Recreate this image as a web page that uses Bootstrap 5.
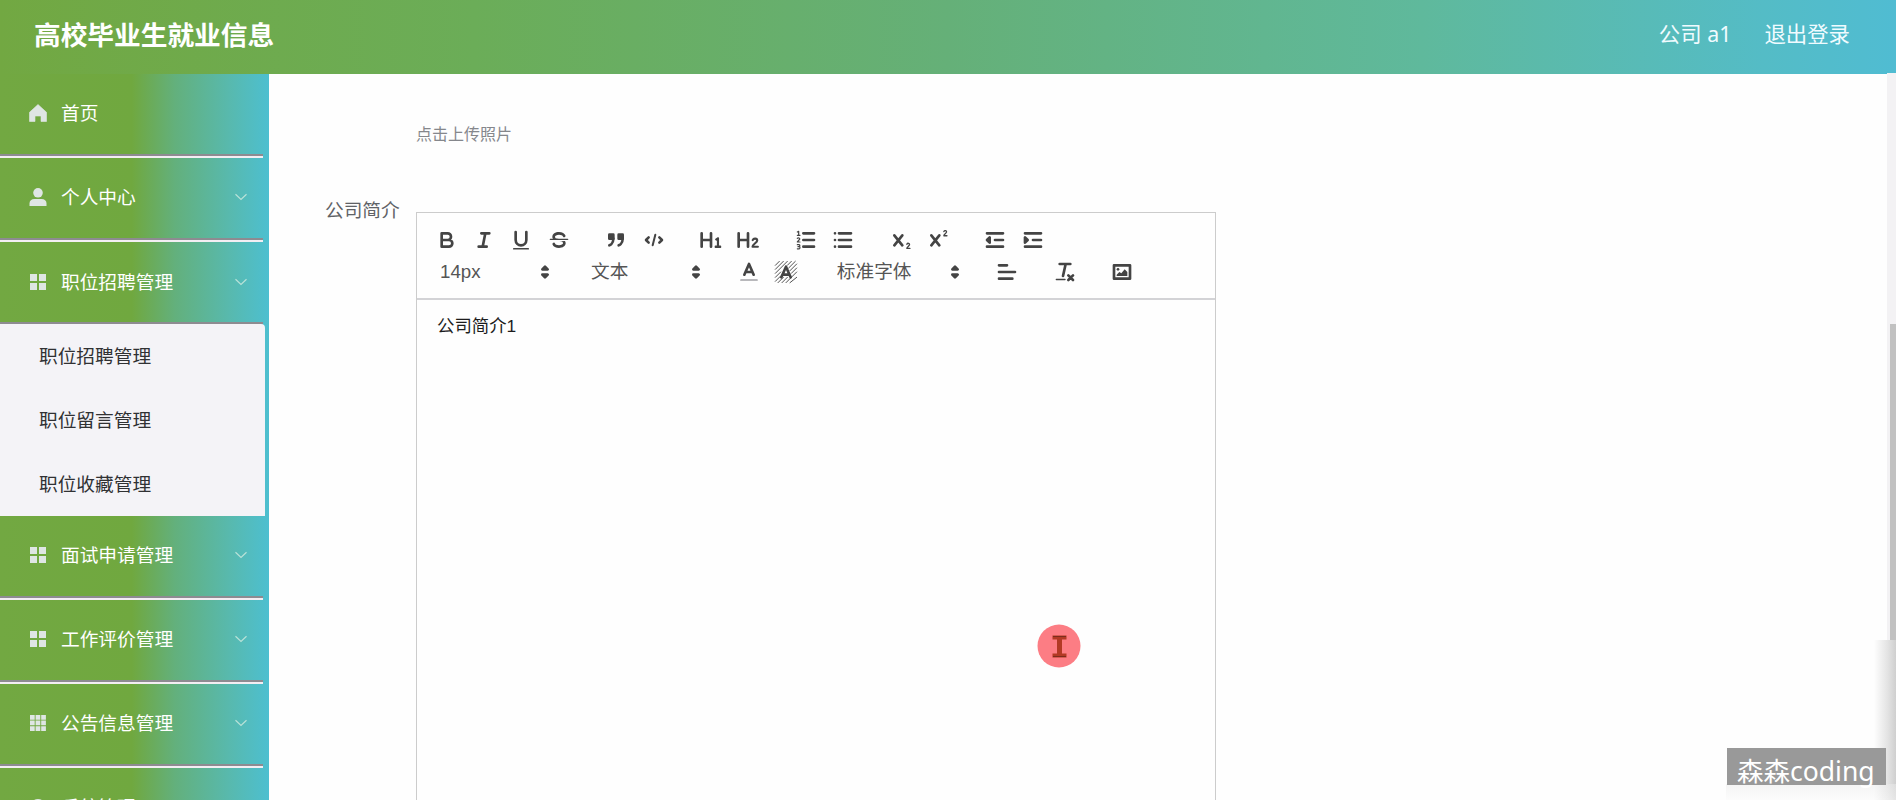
<!DOCTYPE html>
<html lang="zh-CN">
<head>
<meta charset="utf-8">
<title>高校毕业生就业信息</title>
<meta name="viewport" content="width=device-width, initial-scale=1">
<link href="https://cdn.jsdelivr.net/npm/bootstrap@5.3.0/dist/css/bootstrap.min.css" rel="stylesheet">
<style>
html,body{height:100%;overflow:hidden}
body{font-family:"Liberation Sans","Noto Sans CJK SC",sans-serif;font-size:18.7px;line-height:1.3;background:#fefefe;color:#606266}
.topbar{height:73.5px;background:linear-gradient(90deg,#72a842 0%,#6bad58 25%,#65b078 50%,#5fb99c 75%,#54bcc6 93%,#50bcd2 100%);padding:0 46px 4px 34px;color:#fff}
.brand{font-size:26.7px;font-weight:700;padding-top:4px}
.toplinks{font-family:"Noto Sans","Noto Sans CJK SC",sans-serif;font-size:21.4px;gap:33px;color:#f0fbff;padding-bottom:2px}
.side{width:269px;flex:none;background:linear-gradient(90deg,#72a842 0%,#70a83f 49%,#63b07c 65%,#58b9ad 85%,#4dbfd0 100%)}
.side-item{width:263px;height:84px;padding:0 15px 4px 28px;color:#fff;border-bottom:2px solid #f3eef3;box-shadow:inset 0 -2px 0 #8d8b91;flex:none}
.side-item span{padding-top:3px}
.side-item svg{flex:none}
.side-item .ic{width:20px;height:20px;fill:#dfe6e4;margin-right:13px}
.side-item .chev{width:14px;height:8px;fill:none;stroke:#b9e2d8;stroke-width:1.2;margin-left:auto}
.side-item.opened{height:82px;border-bottom:0;padding-bottom:2px}
.submenu{width:265px;height:192px;background:#f4f3f7;color:#333;border-top-right-radius:4px;flex:none}
.submenu a{height:64px;padding:3px 0 0 39px;color:#303133;text-decoration:none}
.pane{padding:0 0 0 56px}
.upload-tip{font-size:16px;color:#85878c;margin:50px 0 0 91px;height:21px;line-height:21px}
.form-line{margin-top:67px}
.form-name{width:91px;flex:none;line-height:24px;margin-top:-13px}
.editor{width:800px;height:640px;border:1px solid #ccc;border-bottom:0}
.tools{height:87px;padding:11px 0 0 11px;border-bottom:2px solid #d3d3d6;color:#444}
.tool-row{height:32px;gap:20px}
.tool{width:37.4px;height:32px}
.tool svg,.pick svg{width:24px;height:24px}
.pick{width:131px;height:32px;padding-left:12px;color:#555}
.pick span{padding-top:2px}
.pick svg{margin-right:2px}
.pick.wide{width:144px}
svg .s{fill:none;stroke:#444;stroke-linecap:round;stroke-linejoin:round;stroke-width:2}
svg .t{fill:none;stroke:#444;stroke-linecap:round;stroke-linejoin:round;stroke-width:1}
svg .f{fill:#444}
svg .sf{fill:#444;stroke:#444;stroke-linecap:round;stroke-linejoin:round;stroke-width:2}
.entry{font-size:17.4px;color:#1c1c1c;padding:15px 20px}
.pointer{position:absolute;left:1037px;top:624px;width:44px;height:44px}
.track{position:absolute;right:0;top:73px;width:9px;height:727px;background:#f3f2f4}
.thumb{position:absolute;right:0;top:324px;width:6px;height:316px;background:#c1c1c1}
.edge-shade{position:absolute;right:0;top:640px;width:22px;height:160px;background:linear-gradient(90deg,rgba(254,254,254,0),#e4e4e4 60%,#cfcfcf)}
.foot-shade{position:absolute;right:0;bottom:0;width:170px;height:16px;background:linear-gradient(#ebebeb,#fafafa);opacity:.5}
.stamp{position:absolute;left:1727px;top:748px;width:159px;height:37px;background:#999;color:#fff;font-family:"Noto Sans","Noto Sans CJK SC",sans-serif;font-size:26.5px;line-height:46px;padding-left:10px;white-space:nowrap}
</style>
</head>
<body class="d-flex flex-column position-relative">
<svg width="0" height="0" class="position-absolute"><defs>
<symbol id="grid4" viewBox="0 0 20 20"><path d="M2 2h7v7H2zM11 2h7v7h-7zM2 11h7v7H2zM11 11h7v7h-7z"/></symbol>
<symbol id="grid9" viewBox="0 0 20 20"><path d="M2 2h4.700v4.700H2zM7.600 2h4.700v4.700h-4.700zM13.200 2h4.700v4.700h-4.700zM2 7.600h4.700v4.700H2zM7.600 7.600h4.700v4.700h-4.700zM13.200 7.600h4.700v4.700h-4.700zM2 13.200h4.700v4.700H2zM7.600 13.200h4.700v4.700h-4.700zM13.200 13.200h4.700v4.700h-4.700z"/></symbol>
<symbol id="chevron" viewBox="0 0 14 8"><path d="M1.500 1.200 7 6.500l5.500-5.300"/></symbol>
<symbol id="updown" viewBox="0 0 18 18"><path class="sf" d="M7 11l2 2 2-2zM7 7l2-2 2 2z"/></symbol>
</defs></svg>

<header class="topbar d-flex align-items-center justify-content-between flex-shrink-0">
  <div class="brand">高校毕业生就业信息</div>
  <nav class="toplinks d-flex"><span>公司 a1</span><span>退出登录</span></nav>
</header>

<div class="d-flex flex-grow-1 overflow-hidden">
  <aside class="side d-flex flex-column overflow-hidden">
    <div class="side-item d-flex align-items-center"><svg class="ic" viewBox="0 0 20 20"><path d="M10 1.500 1.500 9.300V18.500H7V13h6v5.500h5.500V9.300z" stroke="#dfe6e4" stroke-width=".6" stroke-linejoin="round"/></svg><span>首页</span></div>
    <div class="side-item d-flex align-items-center"><svg class="ic" viewBox="0 0 20 20"><circle cx="10" cy="5.800" r="4.800"/><path d="M1.500 19v-2.500c0-3 2-4.500 5-4.500h7c3 0 5 1.500 5 4.500V19z"/></svg><span>个人中心</span><svg class="chev"><use href="#chevron"/></svg></div>
    <div class="side-item opened d-flex align-items-center"><svg class="ic"><use href="#grid4"/></svg><span>职位招聘管理</span><svg class="chev"><use href="#chevron"/></svg></div>
    <div class="submenu d-flex flex-column">
      <a class="d-flex align-items-center">职位招聘管理</a>
      <a class="d-flex align-items-center">职位留言管理</a>
      <a class="d-flex align-items-center">职位收藏管理</a>
    </div>
    <div class="side-item d-flex align-items-center"><svg class="ic"><use href="#grid4"/></svg><span>面试申请管理</span><svg class="chev"><use href="#chevron"/></svg></div>
    <div class="side-item d-flex align-items-center"><svg class="ic"><use href="#grid4"/></svg><span>工作评价管理</span><svg class="chev"><use href="#chevron"/></svg></div>
    <div class="side-item d-flex align-items-center"><svg class="ic"><use href="#grid9"/></svg><span>公告信息管理</span><svg class="chev"><use href="#chevron"/></svg></div>
    <div class="side-item d-flex align-items-center"><svg class="ic" viewBox="0 0 20 20"><circle cx="10" cy="10" r="8"/></svg><span>系统管理</span><svg class="chev"><use href="#chevron"/></svg></div>
  </aside>

  <main class="pane flex-grow-1">
    <div class="upload-tip">点击上传照片</div>
    <div class="form-line d-flex">
      <div class="form-name">公司简介</div>
      <div class="editor">
        <div class="tools">
          <div class="tool-row d-flex">
            <div class="d-flex">
              <span class="tool d-flex align-items-center justify-content-center"><svg viewBox="0 0 18 18"><path class="s" d="M5 4h4.500a2.500 2.500 0 0 1 0 5H5zM5 9h5.500a2.500 2.500 0 0 1 0 5H5z"/></svg></span>
              <span class="tool d-flex align-items-center justify-content-center"><svg viewBox="0 0 18 18"><path class="s" d="M7 4h6M5 14h6M8 14l2-10"/></svg></span>
              <span class="tool d-flex align-items-center justify-content-center"><svg viewBox="0 0 18 18"><path class="s" d="M5 3v6a4 4 0 0 0 8 0V3"/><rect class="f" x="3" y="15" width="12" height="1.200" rx=".5"/></svg></span>
              <span class="tool d-flex align-items-center justify-content-center"><svg viewBox="0 0 18 18"><path class="t" d="M15.500 8.500h-13"/><path class="f" d="M9.007 8C6.542 7.791 6 7.519 6 6.500 6 5.792 7.283 5 9 5c1.571 0 2.765.679 2.969 1.309a1 1 0 0 0 1.900-.617C13.356 4.106 11.354 3 9 3 6.200 3 4 4.538 4 6.500a3.200 3.200 0 0 0 .5 1.843zM8.984 10C11.457 10.208 12 10.479 12 11.500c0 .708-1.283 1.500-3 1.500-1.571 0-2.765-.679-2.969-1.309a1 1 0 1 0-1.900.617C4.644 13.894 6.646 15 9 15c2.800 0 5-1.538 5-3.500a3.200 3.200 0 0 0-.5-1.843z"/></svg></span>
            </div>
            <div class="d-flex">
              <span class="tool d-flex align-items-center justify-content-center"><svg viewBox="0 0 18 18"><path class="sf" d="M4 5h3v3H4zM11 5h3v3h-3z"/><path class="s" d="M7 8c0 4.031-3 5-3 5M14 8c0 4.031-3 5-3 5"/></svg></span>
              <span class="tool d-flex align-items-center justify-content-center"><svg viewBox="0 0 18 18"><path class="s" style="stroke-width:1.900" d="M5 7 3 9l2 2M13 7l2 2-2 2"/><path class="s" style="stroke-width:1.500" d="M10 5 8 13"/></svg></span>
            </div>
            <div class="d-flex">
              <span class="tool d-flex align-items-center justify-content-center"><svg viewBox="0 0 18 18"><path class="f" d="M10 4v10a1 1 0 0 1-2 0v-4H3v4a1 1 0 0 1-2 0V4a1 1 0 0 1 2 0v4h5V4a1 1 0 0 1 2 0zm6.068 9.209h-1.030V7.590a.6.6 0 0 0-.605-.605h-.435a1.001 1.001 0 0 0-.578.297l-1.078.770a.588.588 0 0 0-.121.858l.286.308a.588.588 0 0 0 .847.088l.055-.033v3.936h-1.044a.594.594 0 0 0-.616.605v.561a.594.594 0 0 0 .616.605h3.685a.594.594 0 0 0 .616-.605v-.561a.594.594 0 0 0-.598-.605z"/></svg></span>
              <span class="tool d-flex align-items-center justify-content-center"><svg viewBox="0 0 18 18"><path class="f" d="M10 4v10a1 1 0 0 1-2 0v-4H3v4a1 1 0 0 1-2 0V4a1 1 0 0 1 2 0v4h5V4a1 1 0 0 1 2 0z"/><path class="s" style="stroke-width:1.600" d="M12.500 9.100c.7-1.600 3.400-1.500 3.400.3 0 1.600-3.300 2.600-3.500 4.700h4"/></svg></span>
            </div>
            <div class="d-flex">
              <span class="tool d-flex align-items-center justify-content-center"><svg viewBox="0 0 18 18"><path class="s" d="M7 4h8M7 9h8M7 14h8"/><path class="t" style="stroke-width:.9" d="M2.500 5.500h2M3.500 5.500v-3l-1 .5M2.500 7.700c.8-.6 2-.2 1.800.6L2.500 10.500h2M2.500 12.500h1.300c.8 0 .8 1.500 0 1.500H3M3.800 14c1 0 .8 1.600 0 1.600H2.500"/></svg></span>
              <span class="tool d-flex align-items-center justify-content-center"><svg viewBox="0 0 18 18"><path class="s" d="M6 4h9M6 9h9M6 14h9M3 4h0M3 9h0M3 14h0"/></svg></span>
            </div>
            <div class="d-flex">
              <span class="tool d-flex align-items-center justify-content-center"><svg viewBox="0 0 18 18"><path class="s" d="m4 5.500 6 7.500M10 5.500 4 13"/><path class="t" d="M13.400 12.200c.5-1.200 2.200-.8 2 .3-.2 1.200-2 1.500-2 2.800h2.300"/></svg></span>
              <span class="tool d-flex align-items-center justify-content-center"><svg viewBox="0 0 18 18"><path class="s" d="m4 5.500 6 7.500M10 5.500 4 13"/><path class="t" d="M13.400 2.700c.5-1.200 2.200-.8 2 .3-.2 1.200-2 1.500-2 2.800h2.300"/></svg></span>
            </div>
            <div class="d-flex">
              <span class="tool d-flex align-items-center justify-content-center"><svg viewBox="0 0 18 18"><path class="s" d="M3 14h12M3 4h12M9 9h6"/><path class="sf" d="M5 7v4L3 9z"/></svg></span>
              <span class="tool d-flex align-items-center justify-content-center"><svg viewBox="0 0 18 18"><path class="s" d="M3 14h12M3 4h12M9 9h6"/><path class="sf" d="M3 7v4l2-2z"/></svg></span>
            </div>
          </div>
          <div class="tool-row d-flex">
            <div class="pick d-flex align-items-center justify-content-between"><span>14px</span><svg><use href="#updown"/></svg></div>
            <div class="pick d-flex align-items-center justify-content-between"><span>文本</span><svg><use href="#updown"/></svg></div>
            <div class="d-flex">
              <span class="tool d-flex align-items-center justify-content-center"><svg viewBox="0 0 18 18"><path d="M3 15h12" fill="none" stroke="#a0a0a5" stroke-width="1.300" stroke-linecap="round"/><path class="s" d="M5.500 11 9 3l3.500 8M11.600 9H6.400"/></svg></span>
              <span class="tool d-flex align-items-center justify-content-center"><svg viewBox="0 0 18 18"><path class="t" style="stroke-width:.7" d="M1 4l3-3M1 7l6-6M1 10l9-9M1 13l4-4M1 16l4-4M10 4l3-3M11 6l5-5M12 8l5-5M13 10l4-4M13 13l4-4M12 17l5-4M3 17l4-4M6 17l4-4M9 17l4-4"/><path class="s" d="m5.500 13 3.500-8 3.500 8M11.600 11H6.400"/></svg></span>
            </div>
            <div class="pick wide d-flex align-items-center justify-content-between"><span>标准字体</span><svg><use href="#updown"/></svg></div>
            <span class="tool d-flex align-items-center justify-content-center"><svg viewBox="0 0 18 18"><path class="s" d="M3 9h12M3 14h10M3 4h6"/></svg></span>
            <span class="tool d-flex align-items-center justify-content-center"><svg viewBox="0 0 18 18"><path class="s" d="M5 3h8M9.500 3 7.500 12M11.500 11.500l3.500 3.500M15 11.500l-3.500 3.500"/><rect class="f" x="2" y="14" width="7.500" height="1.200" rx=".5"/></svg></span>
            <span class="tool d-flex align-items-center justify-content-center"><svg viewBox="0 0 18 18"><rect class="s" x="3" y="4" width="12" height="10"/><circle class="f" cx="6" cy="7" r="1"/><path class="f" d="M5 12v-1l2-2 1.500 1L11 7l2 2v3z"/></svg></span>
          </div>
        </div>
        <div class="entry">公司简介1</div>
      </div>
    </div>
  </main>
</div>

<div class="track"></div>
<div class="thumb"></div>
<div class="edge-shade"></div>
<div class="foot-shade"></div>
<div class="stamp">森森coding</div>
<svg class="pointer" viewBox="0 0 44 44"><circle cx="22" cy="22" r="21.500" fill="#fc7d84"/><path d="M15.500 11.500h14v4H25v14h4.500v4h-14v-4H20v-14h-4.500z" fill="#b23a25"/><path d="M16 12.500h13M16 32.500h13" fill="none" stroke="#7c2d1c"/></svg>
<script src="https://cdn.jsdelivr.net/npm/bootstrap@5.3.0/dist/js/bootstrap.bundle.min.js"></script>
</body>
</html>
